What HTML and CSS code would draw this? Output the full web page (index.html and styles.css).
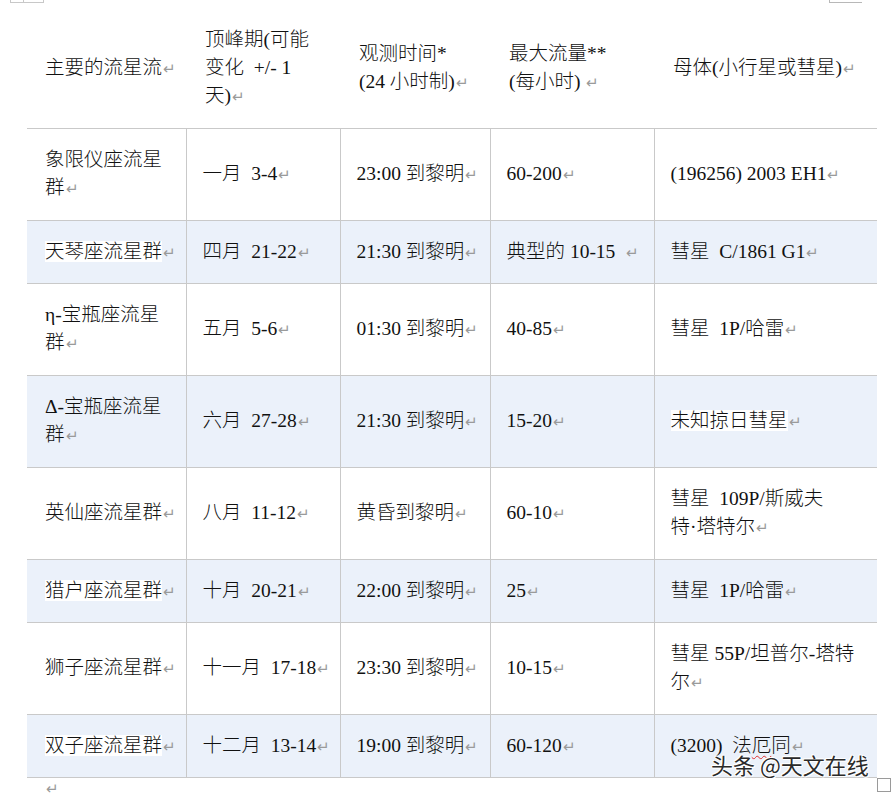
FILE: index.html
```html
<!DOCTYPE html>
<html lang="zh-CN">
<head>
<meta charset="utf-8">
<title>主要的流星流</title>
<link rel="stylesheet" href="styles.css">
</head>
<body>
<div class="page">
  <span class="mark-tl"><i></i></span>
  <span class="mark-tr"></span>
  <table class="meteor">
    <colgroup>
      <col class="c1"><col class="c2"><col class="c3"><col class="c4"><col class="c5">
    </colgroup>
    <thead>
      <tr class="head">
        <th>主要的流星流<span class="pm">↵</span></th>
        <th>顶峰期(可能<br>变化&nbsp; +/- 1<br>天)<span class="pm">↵</span></th>
        <th>观测时间*<br>(24 小时制)<span class="pm">↵</span></th>
        <th>最大流量**<br>(每小时) <span class="pm">↵</span></th>
        <th class="h5">母体(小行星或彗星)<span class="pm">↵</span></th>
      </tr>
    </thead>
    <tbody>
      <tr class="two">
        <td>象限仪座流星<br>群<span class="pm">↵</span></td>
        <td>一月&nbsp; 3-4<span class="pm">↵</span></td>
        <td>23:00 到黎明<span class="pm">↵</span></td>
        <td>60-200<span class="pm">↵</span></td>
        <td>(196256) 2003 EH1<span class="pm">↵</span></td>
      </tr>
      <tr class="one alt">
        <td><span class="hl">天琴座流星群</span><span class="pm">↵</span></td>
        <td>四月&nbsp; 21-22<span class="pm">↵</span></td>
        <td>21:30 到黎明<span class="pm">↵</span></td>
        <td>典型的 10-15 &nbsp;<span class="pm">↵</span></td>
        <td>彗星&nbsp; C/1861 G1<span class="pm">↵</span></td>
      </tr>
      <tr class="two">
        <td>η-宝瓶座流星<br>群<span class="pm">↵</span></td>
        <td>五月&nbsp; 5-6<span class="pm">↵</span></td>
        <td>01:30 到黎明<span class="pm">↵</span></td>
        <td>40-85<span class="pm">↵</span></td>
        <td>彗星&nbsp; 1P/哈雷<span class="pm">↵</span></td>
      </tr>
      <tr class="two alt">
        <td>Δ-宝瓶座流星<br>群<span class="pm">↵</span></td>
        <td>六月&nbsp; 27-28<span class="pm">↵</span></td>
        <td>21:30 到黎明<span class="pm">↵</span></td>
        <td>15-20<span class="pm">↵</span></td>
        <td><span class="hl">未知掠日彗星</span><span class="pm">↵</span></td>
      </tr>
      <tr class="two">
        <td>英仙座流星群<span class="pm">↵</span></td>
        <td>八月&nbsp; 11-12<span class="pm">↵</span></td>
        <td>黄昏到黎明<span class="pm">↵</span></td>
        <td>60-10<span class="pm">↵</span></td>
        <td>彗星&nbsp; 109P/斯威夫<br>特·塔特尔<span class="pm">↵</span></td>
      </tr>
      <tr class="one alt">
        <td><span class="hl">猎户座流星群</span><span class="pm">↵</span></td>
        <td>十月&nbsp; 20-21<span class="pm">↵</span></td>
        <td>22:00 到黎明<span class="pm">↵</span></td>
        <td>25<span class="pm">↵</span></td>
        <td>彗星&nbsp; 1P/哈雷<span class="pm">↵</span></td>
      </tr>
      <tr class="two">
        <td>狮子座流星群<span class="pm">↵</span></td>
        <td>十一月&nbsp; 17-18<span class="pm">↵</span></td>
        <td>23:30 到黎明<span class="pm">↵</span></td>
        <td>10-15<span class="pm">↵</span></td>
        <td>彗星 55P/坦普尔-塔特<br>尔<span class="pm">↵</span></td>
      </tr>
      <tr class="one alt">
        <td><span class="hl">双子座流星群</span><span class="pm">↵</span></td>
        <td>十二月&nbsp; 13-14<span class="pm">↵</span></td>
        <td>19:00 到黎明<span class="pm">↵</span></td>
        <td>60-120<span class="pm">↵</span></td>
        <td>(3200)&nbsp; 法<span class="spell">厄</span>同<span class="pm">↵</span></td>
      </tr>
    </tbody>
  </table>
  <p class="after"><span class="pm">↵</span></p>
  <span class="mark-br"></span>
  <div class="watermark">头条 @天文在线</div>
</div>
</body>
</html>
```

FILE: styles.css
```css
html, body {
  margin: 0;
  padding: 0;
  background: #ffffff;
}

.page {
  position: relative;
  width: 894px;
  height: 796px;
  overflow: hidden;
  padding: 8px 0 0 27px;
  box-sizing: border-box;
  font-family: "Liberation Serif", "Noto Sans CJK SC", serif;
  font-size: 19.5px;
  font-weight: 300;
  color: #111111;
}

.meteor {
  width: 850px;
  border-collapse: collapse;
  table-layout: fixed;
  line-height: 28px;
}

.c1 { width: 159px; }
.c2 { width: 154px; }
.c3 { width: 150px; }
.c4 { width: 164px; }
.c5 { width: 223px; }

.meteor tr.head { height: 120px; }
.meteor tr.one { height: 63px; }
.meteor tr.two { height: 92px; }

.meteor th {
  font-weight: 300;
  text-align: left;
  vertical-align: middle;
  padding: 0 8px 0 19px;
  border-bottom: 1px solid #c9c9c9;
}

.meteor th:first-child { padding-left: 18px; }
.meteor th.h5 { padding-left: 19px; }

.meteor td {
  vertical-align: middle;
  padding: 0 6px 0 16px;
  border-bottom: 1px solid #c9c9c9;
  border-left: 1px solid #c9c9c9;
  white-space: nowrap;
}

.meteor td:first-child {
  border-left: none;
  padding-left: 18px;
}

.meteor tr.alt td {
  background: #ebf1fa;
}

.hl {
  background: #ffffff;
}

.pm {
  font-family: "DejaVu Sans", sans-serif;
  font-size: 15px;
  line-height: 1;
  color: #9a9a9a;
  margin-left: 1px;
}

.spell {
  text-decoration: underline wavy #e03030;
  text-decoration-thickness: 1px;
  text-underline-offset: 3px;
}

.after {
  margin: 0;
  padding: 3px 0 0 18px;
  line-height: 14px;
}

.mark-tl {
  position: absolute;
  left: 10px;
  top: -1px;
  width: 34px;
  height: 4px;
  border: 1px solid #c8c8c8;
  box-sizing: border-box;
}

.mark-tl i {
  position: absolute;
  left: 12px;
  top: 0;
  width: 1px;
  height: 3px;
  background: #c8c8c8;
}

.mark-tr {
  position: absolute;
  left: 829px;
  top: 0;
  width: 33px;
  height: 3px;
  border-bottom: 1px solid #b8b8b8;
  border-left: 1px solid #b8b8b8;
  box-sizing: border-box;
}

.mark-br {
  position: absolute;
  left: 877px;
  top: 778px;
  width: 14px;
  height: 14px;
  border: 1px solid #9a9a9a;
  box-sizing: border-box;
}

.watermark {
  position: absolute;
  left: 711px;
  top: 749px;
  font-family: "Noto Sans CJK SC", sans-serif;
  font-size: 22px;
  font-weight: 400;
  line-height: 30px;
  color: #2a2a2a;
  text-shadow: 1px 0 0 #fff, -1px 0 0 #fff, 0 1px 0 #fff, 0 -1px 0 #fff, 1px 1px 0 #fff, -1px -1px 0 #fff;
}
```
